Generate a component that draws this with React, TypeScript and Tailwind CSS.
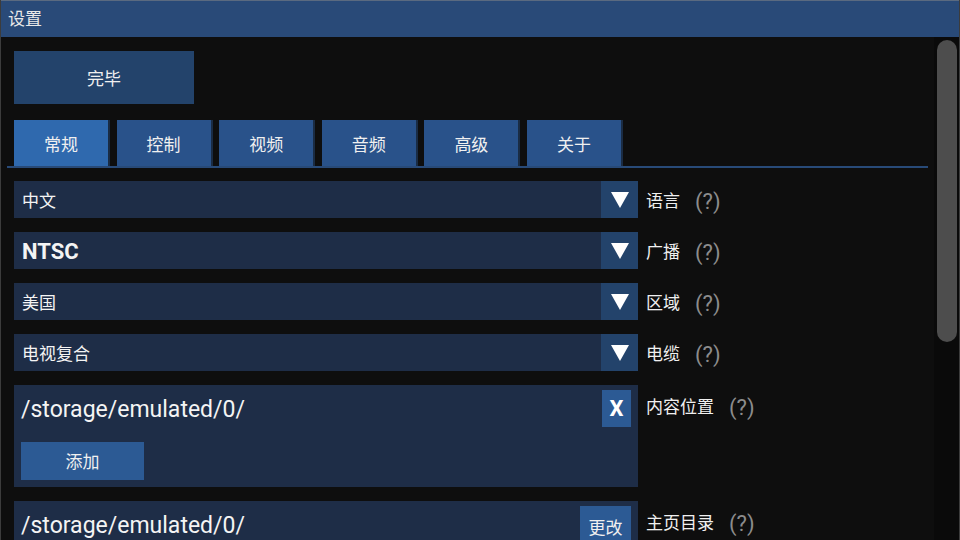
import { ReactNode } from "react";

const FONT = { fontFamily: "Roboto, 'Noto Sans CJK SC', sans-serif" };

const tabs = ["常规", "控制", "视频", "音频", "高级", "关于"];

const selects = [
    { value: "中文", label: "语言", bold: false },
    { value: "NTSC", label: "广播", bold: true },
    { value: "美国", label: "区域", bold: false },
    { value: "电视复合", label: "电缆", bold: false },
];

const Help = () => <span className="text-[#8c8c8c] text-[22px] ml-[15px]">(?)</span>;

const Label = ({ text }: { text: string }) => (
    <div className="flex items-center text-[17px] text-[#f0f0f0] pl-2 pt-[4px]">
        <span>{text}</span>
        <Help />
    </div>
);

const Row = ({ children, label, top }: { children: ReactNode; label: string; top?: boolean }) => (
    <div className={`flex shrink-0 ${top ? "items-start" : "items-center"}`}>
        <div className="w-[624px] shrink-0">{children}</div>
        <div className={top ? "pt-[2px]" : ""}>
            <Label text={label} />
        </div>
    </div>
);

const App = () => {
    return (
        <div
            className="w-[960px] h-[540px] overflow-hidden flex flex-col bg-[#0e0e0e] border-x border-[#3c3c3c]"
            style={FONT}>
            <div className="h-[37px] shrink-0 bg-[#294a78] border-t border-[#5a6a80] flex items-center pl-[7px] pt-[2px] text-[17px] text-[#e8e8e8]">
                设置
            </div>
            <div className="flex flex-1 min-h-0">
                <div className="flex-1 min-h-0 overflow-hidden pl-[13px] pt-[14px] flex flex-col">
                    <button className="w-[180px] h-[53px] shrink-0 bg-[#23436b] text-[#f0f0f0] text-[17px] pt-[4px]">
                        完毕
                    </button>
                    <div className="mt-4 -ml-[7px] w-[921px] shrink-0 border-b-2 border-[#284a78] pl-[7px] flex">
                        {tabs.map((t, i) => (
                            <div
                                key={t}
                                className={`w-[96px] h-[46px] mr-[6.6px] pt-[5px] flex items-center justify-center text-[17px] text-[#f0f0f0] border-r-2 border-[#1a2c44] ${
                                    i === 0 ? "bg-[#2f69ae]" : "bg-[#29528a]"
                                }`}>
                                {t}
                            </div>
                        ))}
                    </div>
                    <div className="mt-[13px] flex flex-col gap-[14px] shrink-0">
                        {selects.map((s) => (
                            <Row key={s.label} label={s.label}>
                                <div className="h-[37px] flex bg-[#1e2d47]">
                                    <div
                                        className={`flex-1 flex items-center pl-2 text-[#f4f4f4] ${
                                            s.bold ? "text-[22px] font-bold pt-[2px]" : "text-[17px] pt-[5px]"
                                        }`}>
                                        {s.value}
                                    </div>
                                    <div className="w-[37px] bg-[#23436b] flex items-center justify-center">
                                        <svg width="20" height="18" viewBox="0 0 20 18">
                                            <polygon points="1,1 19,1 10,17" fill="#ffffff" />
                                        </svg>
                                    </div>
                                </div>
                            </Row>
                        ))}
                        <Row label="内容位置" top>
                            <div className="h-[102px] bg-[#1e2d47] px-[7px] pt-[5px] flex flex-col">
                                <div className="flex items-start justify-between">
                                    <span className="text-[23px] text-[#f4f4f4] mt-[3px]">/storage/emulated/0/</span>
                                    <div className="w-[29px] h-[37px] bg-[#2c5a94] flex items-center justify-center text-[22px] font-bold text-white">
                                        X
                                    </div>
                                </div>
                                <button className="mt-[14px] w-[123px] h-[38px] bg-[#2c5a94] text-[17px] text-[#f0f0f0] pt-[4px]">
                                    添加
                                </button>
                            </div>
                        </Row>
                        <Row label="主页目录" top>
                            <div className="h-[60px] bg-[#1e2d47] px-[7px] pt-[5px] flex items-start justify-between">
                                <span className="text-[23px] text-[#f4f4f4] mt-[3px]">/storage/emulated/0/</span>
                                <div className="w-[51px] h-[40px] bg-[#2c5a94] flex items-center justify-center text-[17px] text-[#f0f0f0] pt-[5px]">
                                    更改
                                </div>
                            </div>
                        </Row>
                    </div>
                </div>
                <div className="w-[25px] shrink-0 bg-[#0a0a0a] pt-[3px] pl-[3px]">
                    <div className="w-[20px] h-[302px] rounded-full bg-[#4d4d4d]" />
                </div>
            </div>
        </div>
    );
};

export default App;
